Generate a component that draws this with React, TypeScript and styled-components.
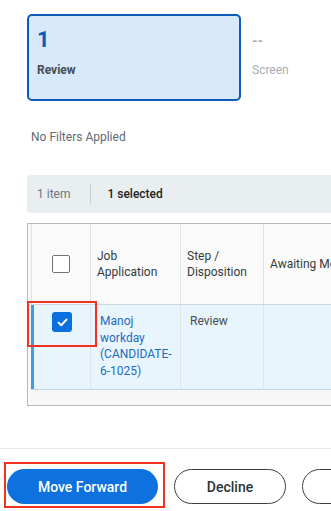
import styled, { createGlobalStyle } from "styled-components";

const GlobalStyle = createGlobalStyle`
  body {
    margin: 0;
    font-family: Roboto, "Liberation Sans", Arial, sans-serif;
    background: #ffffff;
    overflow: hidden;
  }
`;

const Page = styled.div`
  width: 331px;
  height: 511px;
  overflow: hidden;
  display: flex;
  flex-direction: column;
`;

const Content = styled.div`
  padding: 14px 0 0 27px;
`;

const StageRow = styled.div`
  display: flex;
  gap: 11px;
`;

const Stage = styled.div<{ $active?: boolean }>`
  box-sizing: border-box;
  flex: 0 0 auto;
  width: ${({ $active }) => ($active ? "214px" : "80px")};
  height: 87px;
  padding: ${({ $active }) => ($active ? "10px 8px" : "13px 0")};
  border: ${({ $active }) => ($active ? "2px solid #0b5cb8" : "none")};
  border-radius: 5px;
  background: ${({ $active }) => ($active ? "#d7e9fb" : "transparent")};
`;

const StageCount = styled.div<{ $active?: boolean }>`
  font-size: ${({ $active }) => ($active ? "22px" : "14px")};
  font-weight: 700;
  line-height: 28px;
  color: ${({ $active }) => ($active ? "#0b5cb8" : "#a9afb5")};
`;

const StageLabel = styled.div<{ $active?: boolean }>`
  margin-top: ${({ $active }) => ($active ? "8px" : "7px")};
  font-size: 12px;
  line-height: 16px;
  font-weight: ${({ $active }) => ($active ? 700 : 400)};
  color: ${({ $active }) => ($active ? "#464c52" : "#a9afb5")};
`;

const Filters = styled.div`
  margin-top: 28px;
  padding-left: 4px;
  font-size: 12px;
  line-height: 16px;
  color: #5f6a74;
`;

const Toolbar = styled.div`
  margin-top: 30px;
  width: 420px;
  height: 38px;
  display: flex;
  align-items: center;
  padding-left: 10px;
  border-radius: 4px;
  background: #e9eef1;
  font-size: 12px;
`;

const ItemCount = styled.span`
  color: #6b7680;
  margin-right: 20px;
`;

const Divider = styled.span`
  width: 1px;
  height: 20px;
  background: #c8ced3;
  margin-right: 16px;
`;

const Selected = styled.span`
  color: #1f2326;
  font-weight: 500;
`;

const Table = styled.div`
  margin-top: 10px;
  width: 420px;
  border: 1px solid #b8b8b8;
  padding-left: 3px;
  background: #f9f9f9;
`;

const Row = styled.div<{ $selected?: boolean }>`
  display: grid;
  grid-template-columns: 60px 90px 83px 1fr;
  height: ${({ $selected }) => ($selected ? "84px" : "80px")};
  background: ${({ $selected }) => ($selected ? "#e8f5fd" : "#fafafa")};
  border-top: ${({ $selected }) => ($selected ? "1px solid #cfd8de" : "none")};
  border-bottom: ${({ $selected }) => ($selected ? "1px solid #bfd3e0" : "none")};
`;

const Cell = styled.div<{ $header?: boolean }>`
  position: relative;
  display: flex;
  align-items: ${({ $header }) => ($header ? "center" : "flex-start")};
  padding: ${({ $header }) => ($header ? "0 6px" : "8px 6px 0 9px")};
  border-right: 1px solid #e1e4e6;
  font-size: 12px;
  line-height: 16px;
  color: ${({ $header }) => ($header ? "#333a40" : "#474d52")};
  white-space: ${({ $header }) => ($header ? "normal" : "normal")};
`;

const CheckCell = styled(Cell)<{ $selected?: boolean }>`
  justify-content: center;
  padding: ${({ $header }) => ($header ? "0" : "7px 0 0")};
  border-left: ${({ $selected }) => ($selected ? "3px solid #3b9cf0" : "1px solid #e1e4e6")};
`;

const LinkText = styled.span`
  color: #1f6bbd;
  line-height: 16.5px;
`;

const Checkbox = styled.div<{ $checked?: boolean }>`
  box-sizing: border-box;
  width: ${({ $checked }) => ($checked ? "20px" : "18px")};
  height: ${({ $checked }) => ($checked ? "20px" : "18px")};
  border-radius: ${({ $checked }) => ($checked ? "3px" : "2px")};
  border: ${({ $checked }) => ($checked ? "none" : "1.5px solid #6e757b")};
  background: ${({ $checked }) => ($checked ? "#0b6fdd" : "#ffffff")};
  display: flex;
  align-items: center;
  justify-content: center;
`;

const Highlight = styled.div<{ $box: "check" | "button" }>`
  position: absolute;
  box-sizing: border-box;
  border: 2px solid #f2321f;
  pointer-events: none;
  ${({ $box }) =>
    $box === "check"
      ? "left: -7px; top: -4px; width: 70px; height: 46px;"
      : "left: -3px; top: -7px; width: 161px; height: 46px;"}
`;

const TableFoot = styled.div`
  height: 15px;
  background: #f7f7f7;
`;

const Footer = styled.div`
  margin-top: 42px;
  border-top: 1px solid #e6e8ea;
  padding: 20px 0 0 7px;
  display: flex;
  gap: 16px;
`;

const ButtonWrap = styled.div`
  position: relative;
  flex: 0 0 auto;
`;

const Button = styled.button<{ $primary?: boolean; $width: number }>`
  box-sizing: border-box;
  flex: 0 0 auto;
  width: ${({ $width }) => $width}px;
  height: 35px;
  border-radius: 18px;
  border: ${({ $primary }) => ($primary ? "none" : "1px solid #3b3f43")};
  background: ${({ $primary }) => ($primary ? "#0d71df" : "#ffffff")};
  color: ${({ $primary }) => ($primary ? "#ffffff" : "#2e3235")};
  font-family: Roboto, "Liberation Sans", Arial, sans-serif;
  font-size: 14px;
  font-weight: 500;
  padding: 0;
`;

export default function App() {
  return (
    <Page>
      <GlobalStyle />
      <Content>
        <StageRow>
          <Stage $active>
            <StageCount $active>1</StageCount>
            <StageLabel $active>Review</StageLabel>
          </Stage>
          <Stage>
            <StageCount>--</StageCount>
            <StageLabel>Screen</StageLabel>
          </Stage>
        </StageRow>

        <Filters>No Filters Applied</Filters>

        <Toolbar>
          <ItemCount>1 item</ItemCount>
          <Divider />
          <Selected>1 selected</Selected>
        </Toolbar>

        <Table>
          <Row>
            <CheckCell $header>
              <Checkbox />
            </CheckCell>
            <Cell $header>Job Application</Cell>
            <Cell $header>Step / Disposition</Cell>
            <Cell $header>Awaiting Me</Cell>
          </Row>
          <Row $selected>
            <CheckCell $selected>
              <Checkbox $checked>
                <svg width="11" height="9" viewBox="0 0 11 9">
                  <path d="M1.5 4.6 L4.2 7.2 L9.5 1.6" fill="none" stroke="#ffffff" strokeWidth="2" strokeLinecap="round" strokeLinejoin="round" />
                </svg>
              </Checkbox>
              <Highlight $box="check" />
            </CheckCell>
            <Cell>
              <LinkText>Manoj workday (CANDIDATE-6-1025)</LinkText>
            </Cell>
            <Cell>Review</Cell>
            <Cell />
          </Row>
          <TableFoot />
        </Table>
      </Content>

      <Footer>
        <ButtonWrap>
          <Button $primary $width={151}>Move Forward</Button>
          <Highlight $box="button" />
        </ButtonWrap>
        <Button $width={112}>Decline</Button>
        <Button $width={140}>&nbsp;</Button>
      </Footer>
    </Page>
  );
}
